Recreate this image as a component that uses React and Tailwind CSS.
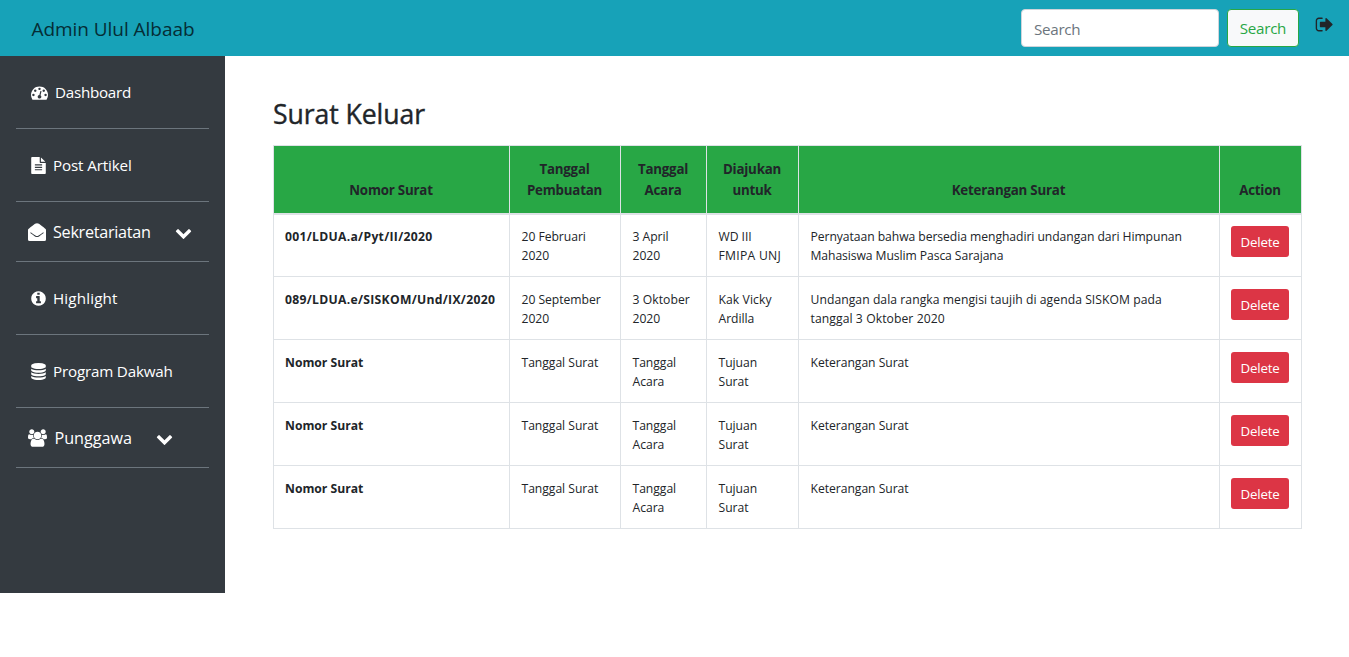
const ICONS = {
  dashboard:
    "M384 1152q0-53-37.5-90.5t-90.5-37.5-90.5 37.5-37.5 90.5 37.5 90.5 90.5 37.5 90.5-37.5 37.5-90.5zm192-448q0-53-37.5-90.5t-90.5-37.5-90.5 37.5-37.5 90.5 37.5 90.5 90.5 37.5 90.5-37.5 37.5-90.5zm428 481l101-382q6-26-7.5-48.5t-38.5-29.5-48 6.5-30 39.5l-101 382q-60 5-107 43.5t-63 98.5q-20 77 20 146t117 89 146-20 89-117q16-60-6-117t-72-91zm660-33q0-53-37.5-90.5t-90.5-37.5-90.5 37.5-37.5 90.5 37.5 90.5 90.5 37.5 90.5-37.5 37.5-90.5zm-640-640q0-53-37.5-90.5t-90.5-37.5-90.5 37.5-37.5 90.5 37.5 90.5 90.5 37.5 90.5-37.5 37.5-90.5zm448 192q0-53-37.5-90.5t-90.5-37.5-90.5 37.5-37.5 90.5 37.5 90.5 90.5 37.5 90.5-37.5 37.5-90.5zm320 448q0 261-141 483-19 29-54 29h-1402q-35 0-54-29-141-221-141-483 0-182 71-348t191-286 286-191 348-71 348 71 286 191 191 286 71 348z",
  file:
    "M1596 476q14 14 28 36h-472v-472q22 14 36 28zm-476 164h544v1056q0 40-28 68t-68 28h-1344q-40 0-68-28t-28-68v-1600q0-40 28-68t68-28h800v544q0 40 28 68t68 28zm160 736v-64q0-14-9-23t-23-9h-704q-14 0-23 9t-9 23v64q0 14 9 23t23 9h704q14 0 23-9t9-23zm0-256v-64q0-14-9-23t-23-9h-704q-14 0-23 9t-9 23v64q0 14 9 23t23 9h704q14 0 23-9t9-23zm0-256v-64q0-14-9-23t-23-9h-704q-14 0-23 9t-9 23v64q0 14 9 23t23 9h704q14 0 23-9t9-23z",
  envelope:
    "M0 690Q0 640 40 605Q110 545 700 85Q896-60 1092 85Q1682 545 1752 605Q1792 640 1792 690V1632Q1792 1792 1632 1792H160Q0 1792 0 1632ZM275 920L225 1000Q420 1150 690 1335Q896 1475 1102 1335Q1372 1150 1567 1000L1517 920Q1300 1085 1050 1255Q896 1355 742 1255Q492 1085 275 920Z",
  info:
    "M1152 1376v-160q0-14-9-23t-23-9h-96v-512q0-14-9-23t-23-9h-320q-14 0-23 9t-9 23v160q0 14 9 23t23 9h96v320h-96q-14 0-23 9t-9 23v160q0 14 9 23t23 9h448q14 0 23-9t9-23zm-128-896v-160q0-14-9-23t-23-9h-192q-14 0-23 9t-9 23v160q0 14 9 23t23 9h192q14 0 23-9t9-23zm640 416q0 209-103 385.5t-279.5 279.5-385.5 103-385.5-103-279.5-279.5-103-385.5 103-385.5 279.5-279.5 385.5-103 385.5 103 279.5 279.5 103 385.5z",
  database:
    "M896 768q237 0 443-43t325-127v170q0 69-103 128t-280 93.5-385 34.5-385-34.5-280-93.5-103-128v-170q119 84 325 127t443 43zm0 768q237 0 443-43t325-127v170q0 69-103 128t-280 93.5-385 34.5-385-34.5-280-93.5-103-128v-170q119 84 325 127t443 43zm0-384q237 0 443-43t325-127v170q0 69-103 128t-280 93.5-385 34.5-385-34.5-280-93.5-103-128v-170q119 84 325 127t443 43zm0-1152q208 0 385 34.5t280 93.5 103 128v128q0 69-103 128t-280 93.5-385 34.5-385-34.5-280-93.5-103-128v-128q0-69 103-128t280-93.5 385-34.5z",
  users:
    "M529 896q-162 5-265 128h-134q-82 0-138-40.5t-56-118.5q0-353 124-353 6 0 43.5 21t97.5 42.5 119 21.5q67 0 133-23-5 37-5 66 0 139 81 256zm1071 637q0 120-73 189.5t-194 69.5h-874q-121 0-194-69.5t-73-189.5q0-53 3.5-103.5t14-109 26.5-108.5 43-97.5 62-81 85.5-53.5 111.5-20q10 0 43 21.5t73 48 107 48 135 21.5 135-21.5 107-48 73-48 43-21.5q61 0 111.5 20t85.5 53.5 62 81 43 97.5 26.5 108.5 14 109 3.5 103.5zm-1024-1277q0 106-75 181t-181 75-181-75-75-181 75-181 181-75 181 75 75 181zm704 384q0 159-112.5 271.5t-271.5 112.5-271.5-112.5-112.5-271.5 112.5-271.5 271.5-112.5 271.5 112.5 112.5 271.5zm576 225q0 78-56 118.5t-138 40.5h-134q-103-123-265-128 81-117 81-256 0-29-5-66 66 23 133 23 59 0 119-21.5t97.5-42.5 43.5-21q124 0 124 353zm-128-609q0 106-75 181t-181 75-181-75-75-181 75-181 181-75 181 75 75 181z",
  chevron:
    "M1683 808l-742 741q-19 19-45 19t-45-19l-742-741q-19-19-19-45.5t19-45.5l166-165q19-19 45-19t45 19l531 531 531-531q19-19 45-19t45 19l166 165q19 19 19 45.5t-19 45.5z",
  signOut:
    "M704 1440q0 4 1 20t.5 26.5-3 23.5-10 19.5-20.5 6.5h-320q-119 0-203.5-84.5t-84.5-203.5v-704q0-119 84.5-203.5t203.5-84.5h320q13 0 22.5 9.5t9.5 22.5q0 4 1 20t.5 26.5-3 23.5-10 19.5-20.5 6.5h-320q-66 0-113 47t-47 113v704q0 66 47 113t113 47h312l11.5 1 11.5 3 8 5.5 7 9 2 13.5zm928-544q0 26-19 45l-544 544q-19 19-45 19t-45-19-19-45v-288h-448q-26 0-45-19t-19-45v-384q0-26 19-45t45-19h448v-288q0-26 19-45t45-19 45 19l544 544q19 19 19 45z",
};

const Icon = ({ name, box = "0 0 1792 1792", className }) => (
  <svg viewBox={box} fill="currentColor" className={`shrink-0 ${className}`} aria-hidden="true">
    <path fillRule={name === "envelope" ? "evenodd" : undefined} d={ICONS[name]} />
  </svg>
);

const MENU = [
  { label: "Dashboard", icon: "dashboard", row: "h-[73px] pl-[15px]", size: "w-[17px] h-[17px]", text: "ml-[7px] text-[15.2px] tracking-[-0.27px]" },
  { label: "Post Artikel", icon: "file", box: "128 0 1536 1792", row: "h-[73px] pl-[15px]", size: "w-[15px] h-[17px]", text: "ml-[7px] text-[15.2px] tracking-[-0.13px]" },
  { label: "Sekretariatan", icon: "envelope", row: "h-[60px] pl-3", size: "w-[18px] h-[18px]", text: "ml-[7px] pt-px text-[16.2px] tracking-[-0.29px]", chevron: "ml-6" },
  { label: "Highlight", icon: "info", box: "128 0 1536 1792", row: "h-[73px] pl-[15px]", size: "w-[15px] h-[17px]", text: "ml-[7px] text-[15.2px] tracking-[0.15px]" },
  { label: "Program Dakwah", icon: "database", box: "128 0 1536 1792", row: "h-[73px] pl-[15px]", size: "w-[15px] h-[17px]", text: "ml-[7px] text-[15.2px] tracking-[-0.19px]" },
  { label: "Punggawa", icon: "users", box: "-64 0 1920 1792", row: "h-[60px] pl-3", size: "w-[19px] h-[18px]", text: "ml-[7.5px] pt-px text-[16.2px] tracking-[-0.03px]", chevron: "ml-6" },
];

const HEADERS = [["Nomor Surat"], ["Tanggal", "Pembuatan"], ["Tanggal", "Acara"], ["Diajukan", "untuk"], ["Keterangan Surat"], ["Action"]];

const EMPTY = ["Nomor Surat", ["Tanggal Surat"], ["Tanggal", "Acara"], ["Tujuan", "Surat"], ["Keterangan Surat"]];
const ROWS = [
  [
    "001/LDUA.a/Pyt/II/2020",
    ["20 Februari", "2020"],
    ["3 April", "2020"],
    ["WD III", "FMIPA UNJ"],
    ["Pernyataan bahwa bersedia menghadiri undangan dari Himpunan", "Mahasiswa Muslim Pasca Sarajana"],
  ],
  [
    "089/LDUA.e/SISKOM/Und/IX/2020",
    ["20 September", "2020"],
    ["3 Oktober", "2020"],
    ["Kak Vicky", "Ardilla"],
    ["Undangan dala rangka mengisi taujih di agenda SISKOM pada", "tanggal 3 Oktober 2020"],
  ],
  EMPTY,
  EMPTY,
  EMPTY,
];

// Per-line letter spacing, for the lines whose width differs from the cell default.
const TRACKING = {
  "FMIPA UNJ": "tracking-[0.28px]",
  "Pernyataan bahwa bersedia menghadiri undangan dari Himpunan": "tracking-[-0.06px]",
  "Mahasiswa Muslim Pasca Sarajana": "tracking-[-0.08px]",
  "Undangan dala rangka mengisi taujih di agenda SISKOM pada": "tracking-[0.05px]",
  "tanggal 3 Oktober 2020": "tracking-[0.08px]",
  "Kak Vicky": "tracking-[0.08px]",
  "3 Oktober": "tracking-[0.06px]",
};

const Lines = ({ lines }) =>
  lines.map((line) => <span key={line} className={`block whitespace-nowrap ${TRACKING[line] ?? ""}`}>{line}</span>);

function Navbar() {
  return (
    <header className="flex h-14 items-center bg-[#17a2b8] pl-[31.5px]">
      <span className="pt-0.5 text-[19px] tracking-[-0.05px] text-[#052d35]">Admin Ulul Albaab</span>
      <form className="ml-auto flex items-center">
        <input
          type="text"
          placeholder="Search"
          className="h-[38px] w-[198px] rounded border border-[#ced4da] bg-white px-3 pt-0.5 text-[15.2px] tracking-[-0.3px] placeholder:text-[#6c757d]"
        />
        <button type="button" className="ml-2 flex h-[38px] w-[72px] items-center justify-center rounded border border-[#28a745] bg-[#f8f9fa] text-[15.2px] tracking-[-0.3px] text-[#28a745]">
          Search
        </button>
      </form>
      <Icon name="signOut" box="0 128 1664 1536" className="mr-4 mb-[7px] ml-4 h-[17px] w-[18px] text-[#212529]" />
    </header>
  );
}

function Sidebar() {
  return (
    <nav className="h-[537px] w-[225px] shrink-0 bg-[#343a40] px-4 text-white">
      {MENU.map((m) => (
        <div key={m.label} className={`flex items-center border-b border-[#6c757d] ${m.row}`}>
          <Icon name={m.icon} box={m.box} className={m.size} />
          <span className={`whitespace-nowrap ${m.text}`}>{m.label}</span>
          {m.chevron && <Icon name="chevron" className={`mt-0.5 size-[17px] ${m.chevron}`} />}
        </div>
      ))}
    </nav>
  );
}

function LetterTable() {
  return (
    <table className="w-[1029px] table-fixed border-collapse border border-[#dee2e6] text-[12.16px] leading-[19px]">
      <colgroup>
        <col className="w-[236px]" />
        <col className="w-[111px]" />
        <col className="w-[86px]" />
        <col className="w-[92px]" />
        <col className="w-[421px]" />
        <col className="w-[82px]" />
      </colgroup>
      <thead>
        <tr className="h-[68px] bg-[#28a745] text-[13.3px] leading-[21px] tracking-[-0.2px]">
          {HEADERS.map((h) => (
            <th key={h.join(" ")} className="border border-b-2 border-[#dee2e6] p-0 pr-px pb-3 text-center align-bottom font-bold">
              <Lines lines={h} />
            </th>
          ))}
        </tr>
      </thead>
      <tbody>
        {ROWS.map(([number, ...cells], i) => {
          const top = i === 0 ? "pt-3" : "pt-[13px]";
          return (
            <tr key={i} className="h-[63px]">
              <th className={`border border-[#dee2e6] pr-0 pb-0 pl-[11px] text-left align-top font-bold whitespace-nowrap ${top} ${i < 2 ? "tracking-[0.3px]" : ""}`}>
                {number}
              </th>
              {cells.map((lines, j) => (
                <td key={j} className={`border border-[#dee2e6] pr-0 pb-0 pl-[11.5px] align-top tracking-[-0.04px] ${top}`}>
                  <Lines lines={lines} />
                </td>
              ))}
              <td className={`border border-[#dee2e6] pr-0 pb-0 pl-[11px] align-top ${i === 0 ? "pt-[11.5px]" : "pt-3"}`}>
                <button type="button" className="flex h-[31px] w-[58px] items-center justify-center rounded-[3px] bg-[#dc3545] pt-px text-[13.3px] tracking-[-0.2px] text-white">
                  Delete
                </button>
              </td>
            </tr>
          );
        })}
      </tbody>
    </table>
  );
}

export default function App() {
  return (
    <div className="min-h-screen bg-white font-['Open_Sans',sans-serif] text-[#212529]">
      <Navbar />
      <div className="flex">
        <Sidebar />
        <main className="pt-[41px] pl-12">
          <h3 className="mb-3.5 text-[26.6px] leading-[34px] font-medium tracking-[-0.07px] [-webkit-text-stroke:0.4px]">Surat Keluar</h3>
          <LetterTable />
        </main>
      </div>
    </div>
  );
}
